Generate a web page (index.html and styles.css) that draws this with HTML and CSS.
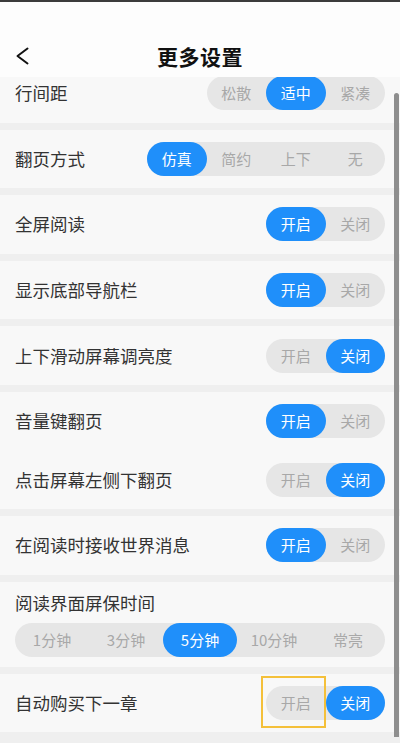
FILE: index.html
```html
<!DOCTYPE html>
<html lang="zh-CN">
<head>
  <meta charset="UTF-8" />
  <meta name="viewport" content="width=device-width, initial-scale=1.0"/>
  <title>更多设置</title>
  <link rel="stylesheet" href="styles.css">
</head>
<body>

<div class="page">
  <div class="header">
    <svg class="back" width="14" height="18" viewBox="0 0 14 18">
      <path d="M12.5 1.5 L2.5 9 L12.5 16.5" fill="none" stroke="#111" stroke-width="2" stroke-linecap="round" stroke-linejoin="round"/>
    </svg>
    <h1>更多设置</h1>
    <span></span>
  </div>

  <div class="list">
    <div class="group first">
      <div class="row">
        <span class="label">行间距</span>
        <div class="seg">
          <span>松散</span><span class="on">适中</span><span>紧凑</span>
        </div>
      </div>
    </div>

    <div class="group">
      <div class="row">
        <span class="label">翻页方式</span>
        <div class="seg">
          <span class="on">仿真</span><span>简约</span><span>上下</span><span>无</span>
        </div>
      </div>
    </div>

    <div class="group">
      <div class="row">
        <span class="label">全屏阅读</span>
        <div class="seg"><span class="on">开启</span><span>关闭</span></div>
      </div>
    </div>

    <div class="group">
      <div class="row">
        <span class="label">显示底部导航栏</span>
        <div class="seg"><span class="on">开启</span><span>关闭</span></div>
      </div>
    </div>

    <div class="group">
      <div class="row">
        <span class="label">上下滑动屏幕调亮度</span>
        <div class="seg"><span>开启</span><span class="on">关闭</span></div>
      </div>
    </div>

    <div class="group">
      <div class="row">
        <span class="label">音量键翻页</span>
        <div class="seg"><span class="on">开启</span><span>关闭</span></div>
      </div>
      <div class="row">
        <span class="label">点击屏幕左侧下翻页</span>
        <div class="seg"><span>开启</span><span class="on">关闭</span></div>
      </div>
    </div>

    <div class="group">
      <div class="row">
        <span class="label">在阅读时接收世界消息</span>
        <div class="seg"><span class="on">开启</span><span>关闭</span></div>
      </div>
    </div>

    <div class="group stack">
      <span class="label">阅读界面屏保时间</span>
      <div class="seg wide">
        <span>1分钟</span><span>3分钟</span><span class="on">5分钟</span><span>10分钟</span><span>常亮</span>
      </div>
    </div>

    <div class="group">
      <div class="row">
        <span class="label">自动购买下一章</span>
        <div class="seg">
          <span class="focus">开启</span><span class="on">关闭</span>
        </div>
      </div>
    </div>
  </div>

  <div class="scrollbar"></div>
</div>

</body>
</html>
```

FILE: styles.css
```css
body {
  margin: 0;
  font-family: "Noto Sans CJK SC", "Noto Sans", sans-serif;
  background: #efefef;
  color: #333;
}
.page {
  position: relative;
  width: 400px;
  height: 743px;
  overflow: hidden;
  border-top: 2px solid #3c3c3c;
  box-sizing: border-box;
  background: #efefef;
}
.header {
  position: relative;
  z-index: 2;
  height: 75px;
  background: #fdfdfd;
  display: grid;
  grid-template-columns: 1fr auto 1fr;
  align-items: end;
  padding: 0 15px 8px;
  box-sizing: border-box;
}
.back {
  display: block;
  margin-bottom: 4px;
}
h1 {
  margin: 0;
  font-size: 21px;
  line-height: 26px;
  font-weight: 700;
  color: #111;
  letter-spacing: 0.5px;
}
.list {
  position: relative;
  z-index: 1;
}
.group {
  background: #f8f8f8;
  margin-bottom: 7px;
}
.group.first {
  margin-top: -13px;
}
.row {
  height: 58.6px;
  padding: 0 15px;
  display: flex;
  align-items: center;
  justify-content: space-between;
}
.label {
  font-size: 17.5px;
  line-height: 22px;
  color: #333;
}
.seg {
  display: flex;
  height: 34px;
  background: #e6e6e6;
  border-radius: 17px;
}
.seg span {
  position: relative;
  width: 59.5px;
  text-align: center;
  line-height: 34px;
  font-size: 15px;
  color: #a8a8a8;
  border-radius: 17px;
}
.seg .on {
  background: #1f8ffa;
  color: #fff;
}
.stack {
  padding: 10px 15px;
  height: 85px;
  box-sizing: border-box;
  display: flex;
  flex-direction: column;
  gap: 9px;
}
.seg.wide span {
  flex: 1;
}
.focus::after {
  content: "";
  position: absolute;
  left: -5px;
  top: -10px;
  width: 65px;
  height: 52px;
  border: 2px solid #f4c03a;
  box-sizing: border-box;
}
.scrollbar {
  position: absolute;
  z-index: 3;
  right: 1px;
  top: 91px;
  bottom: 6px;
  width: 5px;
  background: #8e8e8e;
  border-radius: 3px 3px 0 0;
}
```
